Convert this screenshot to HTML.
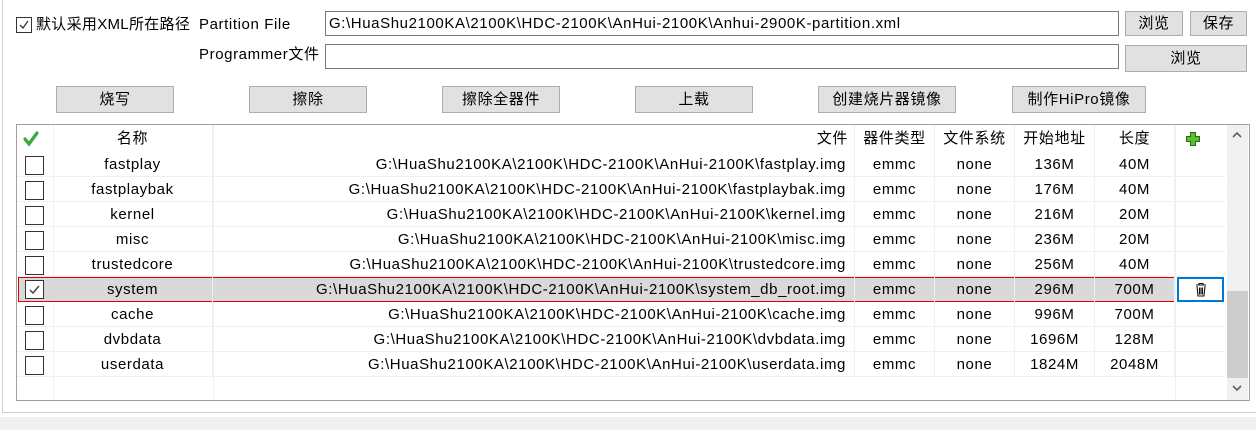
<!DOCTYPE html>
<html><head><meta charset="utf-8"><style>
*{box-sizing:border-box;margin:0;padding:0}
body{width:1256px;height:430px;background:#fff;font-family:"Liberation Sans","Noto Sans CJK SC",sans-serif;font-size:15px;letter-spacing:0.6px;color:#000;position:relative;overflow:hidden}
.a{position:absolute}
.btn{position:absolute;background:#e1e1e1;border:1px solid #adadad;text-align:center;line-height:24px;font-size:15px}
.inp{position:absolute;border:1px solid #7a7a7a;background:#fff;height:25px;line-height:24px;padding-left:3px;white-space:nowrap}
.cell{position:absolute;white-space:nowrap;line-height:26px;height:25px;text-align:center;border-right:1px solid #f0f0f0}
.row{position:absolute;left:17px;width:1208px;height:25px;border-bottom:1px solid #f0f0f0}
.cb{position:absolute;left:8px;top:4px;width:19px;height:19px;border:1px solid #333;background:#fff}
</style></head><body>
<div class="a" style="left:2px;top:0;width:1px;height:413px;background:#d0d0d0"></div>
<div class="a" style="left:2px;top:412px;width:1254px;height:1px;background:#d0d0d0"></div>
<div class="a" style="left:0;top:417px;width:1256px;height:13px;background:#f0f0f0"></div>

<div class="a" style="left:16px;top:17px;width:16px;height:16px;border:1px solid #333;background:#fff"><svg width="14" height="14" style="position:absolute;left:0;top:0"><path d="M3 7 L6 10 L11 3" fill="none" stroke="#333" stroke-width="1.3"/></svg></div>
<div class="a" style="left:36px;top:14px;line-height:22px;letter-spacing:0.3px">默认采用XML所在路径</div>
<div class="a" style="left:199px;top:14px;line-height:22px">Partition File</div>
<div class="inp" style="left:325px;top:11px;width:794px">G:\HuaShu2100KA\2100K\HDC-2100K\AnHui-2100K\Anhui-2900K-partition.xml</div>
<div class="btn" style="left:1125px;top:11px;width:58px;height:25px">浏览</div>
<div class="btn" style="left:1190px;top:11px;width:57px;height:25px">保存</div>
<div class="a" style="left:199px;top:44px;line-height:22px">Programmer文件</div>
<div class="inp" style="left:325px;top:44px;width:794px"></div>
<div class="btn" style="left:1125px;top:45px;width:122px;height:27px;line-height:26px">浏览</div>

<div class="btn" style="left:56px;top:86px;width:118px;height:27px;line-height:26px">烧写</div>
<div class="btn" style="left:249px;top:86px;width:118px;height:27px;line-height:26px">擦除</div>
<div class="btn" style="left:442px;top:86px;width:118px;height:27px;line-height:26px">擦除全器件</div>
<div class="btn" style="left:635px;top:86px;width:118px;height:27px;line-height:26px">上载</div>
<div class="btn" style="left:818px;top:86px;width:138px;height:27px;line-height:26px">创建烧片器镜像</div>
<div class="btn" style="left:1012px;top:86px;width:134px;height:27px;line-height:26px">制作HiPro镜像</div>

<div class="a" style="left:16px;top:124px;width:1234px;height:277px;border:1px solid #a0a0a0"></div>
<div class="a" style="left:53px;top:125px;width:1px;height:275px;background:#f0f0f0"></div>
<div class="a" style="left:213px;top:125px;width:1px;height:275px;background:#f0f0f0"></div>
<div class="row" style="top:125px;height:27px;border-bottom:none">
<svg class="a" style="left:6px;top:6px" width="16" height="16"><path d="M2 8 L6 13 L14 2" fill="none" stroke="#3aa83a" stroke-width="3.2" stroke-linecap="round"/></svg>
<div class="cell" style="left:36px;width:160px;line-height:28px;height:27px">名称</div>
<div class="cell" style="left:196px;width:642px;text-align:right;padding-right:6px;line-height:28px;height:27px">文件</div>
<div class="cell" style="left:838px;width:80px;line-height:28px;height:27px">器件类型</div>
<div class="cell" style="left:918px;width:80px;line-height:28px;height:27px">文件系统</div>
<div class="cell" style="left:998px;width:80px;line-height:28px;height:27px">开始地址</div>
<div class="cell" style="left:1078px;width:80px;line-height:28px;height:27px">长度</div>
<svg class="a" style="left:1168px;top:6px" width="16" height="16"><path d="M5.5 1.5h5v4h4v5h-4v4h-5v-4h-4v-5h4z" fill="#5cc02c" stroke="#1f6e10" stroke-width="1"/></svg>
</div>

<div id="rows"></div>
<script>
var d=[["fastplay","fastplay.img","136M","40M"],["fastplaybak","fastplaybak.img","176M","40M"],["kernel","kernel.img","216M","20M"],["misc","misc.img","236M","20M"],["trustedcore","trustedcore.img","256M","40M"],["system","system_db_root.img","296M","700M"],["cache","cache.img","996M","700M"],["dvbdata","dvbdata.img","1696M","128M"],["userdata","userdata.img","1824M","2048M"]];
var h="";
d.forEach(function(r,i){var t=152+25*i;var sel=i==5;
h+='<div class="row" style="top:'+t+'px;'+(sel?'background:#d9d9d9;border:1px solid #e00000;left:18px;width:1157px;':'')+'">';
h+='<div class="cb"'+(sel?' style="left:6px;top:2px"':'')+'>'+(sel?'<svg width="17" height="17"><path d="M4 9 L7 12 L13 5" fill="none" stroke="#444" stroke-width="1.5"/></svg>':'')+'</div>';
var o=sel?-2:0, tp=sel?'top:-1px;':'';
h+='<div class="cell" style="'+tp+'left:'+(36+o)+'px;width:160px">'+r[0]+'</div>';
h+='<div class="cell" style="'+tp+'left:'+(196+o)+'px;width:642px;text-align:right;padding-right:8px">G:\\HuaShu2100KA\\2100K\\HDC-2100K\\AnHui-2100K\\'+r[1]+'</div>';
h+='<div class="cell" style="'+tp+'left:'+(838+o)+'px;width:80px">emmc</div>';
h+='<div class="cell" style="'+tp+'left:'+(918+o)+'px;width:80px">none</div>';
h+='<div class="cell" style="'+tp+'left:'+(998+o)+'px;width:80px">'+r[2]+'</div>';
h+='<div class="cell" style="'+tp+'left:'+(1078+o)+'px;width:80px">'+r[3]+'</div>';
h+='</div>';
if(sel)h+='<div class="a" style="left:1177px;top:'+t+'px;width:47px;height:25px;border:2px solid #0078d7;text-align:center"><svg width="14" height="16" style="margin-top:3px"><path d="M2 3h10M5 3V1.5h4V3M3 4l1 10h6l1-10M5.5 5.5v7M7 5.5v7M8.5 5.5v7" fill="none" stroke="#111" stroke-width="1.1"/></svg></div>';
});
document.getElementById("rows").innerHTML=h;
</script>
<div class="a" style="left:1175px;top:125px;width:1px;height:275px;background:#f0f0f0"></div>
<div class="a" style="left:1227px;top:125px;width:21px;height:275px;background:#f0f0f0"></div>
<div class="a" style="left:1227px;top:291px;width:21px;height:87px;background:#cdcdcd"></div>
<svg class="a" style="left:1231px;top:130px" width="12" height="10"><path d="M2 7 L6 3 L10 7" fill="none" stroke="#606060" stroke-width="1.6"/></svg>
<svg class="a" style="left:1231px;top:383px" width="12" height="10"><path d="M2 3 L6 7 L10 3" fill="none" stroke="#606060" stroke-width="1.6"/></svg>
</body></html>
